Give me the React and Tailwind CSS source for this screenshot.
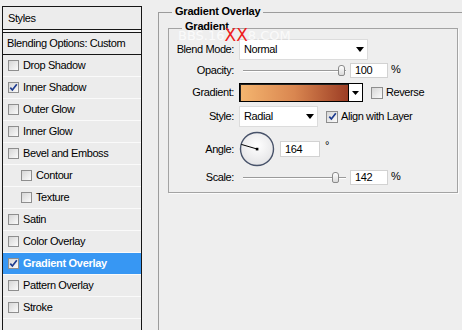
import React from "react";

function Check({ checked, size = 11 }) {
  return (
    <span
      className={`${size === 12 ? "w-[12px] h-[12px]" : "w-[11px] h-[11px]"} shrink-0 border border-[#8e8e8e] bg-linear-to-br from-[#d6d6d6] to-[#fbfbfb] flex items-center justify-center`}
    >
      {checked && (
        <svg width="9" height="9" viewBox="0 0 9 9">
          <path d="M1.3 4.6 L3.4 7 L7.8 1.3" fill="none" stroke="#1d3b8f" strokeWidth="1.7" />
        </svg>
      )}
    </span>
  );
}

function Arrow() {
  return (
    <svg width="8" height="5" viewBox="0 0 8 5" className="shrink-0">
      <path d="M0 0 H8 L4 5 Z" fill="#000" />
    </svg>
  );
}

function Row({ label, checked, sub, active }) {
  return (
    <div
      className={`h-[22px] flex items-center gap-[4px] border-b border-[#fafafa] ${sub ? "pl-[18px]" : "pl-[5px]"} ${active ? "bg-[#3797f3] text-white font-bold tracking-[-0.3px]" : ""}`}
    >
      <Check checked={checked} />
      <span>{label}</span>
    </div>
  );
}

function Slider({ pos }) {
  return (
    <div className="relative w-[107px] h-[15px] shrink-0">
      <div className="absolute left-[4px] right-0 top-[7px] h-[2px] border-t border-[#9a9a9a] border-b border-b-white" />
      <div
        className="absolute top-[2px] w-[7px] h-[11px] rounded-t-[3px] rounded-b-[2px] border border-[#8a8a8a] bg-linear-to-b from-white to-[#dadada]"
        style={{ left: pos }}
      />
    </div>
  );
}

function Field({ value, w = "w-[38px]", h = "h-[15px]" }) {
  return (
    <div className={`${w} ${h} shrink-0 bg-white border border-[#d2d2d2] flex items-center pl-[4px]`}>
      {value}
    </div>
  );
}

function Label({ children }) {
  return <div className="w-[65px] shrink-0 text-right">{children}</div>;
}

export default function App() {
  const rows = [
    { label: "Drop Shadow" },
    { label: "Inner Shadow", checked: true },
    { label: "Outer Glow" },
    { label: "Inner Glow" },
    { label: "Bevel and Emboss" },
    { label: "Contour", sub: true },
    { label: "Texture", sub: true },
    { label: "Satin" },
    { label: "Color Overlay" },
    { label: "Gradient Overlay", checked: true, active: true },
    { label: "Pattern Overlay" },
    { label: "Stroke" },
  ];

  return (
    <div className="relative w-[462px] h-[330px] overflow-hidden bg-[#eeeeee] flex items-start font-['Liberation_Sans',Arial,sans-serif] text-[11px] leading-[13px] tracking-[-0.4px] text-black">
      {/* Left styles list */}
      <div className="ml-[2px] mt-[6px] w-[140px] h-[340px] shrink-0 border border-[#161616] bg-[#ececec]">
        <div className="h-[23px] flex items-center pl-[5px] border-b border-[#161616]">Styles</div>
        <div className="h-[2px] bg-[#f6f6f6]" />
        <div className="h-[23px] flex items-center pl-[4px] border-t border-b border-[#161616]">
          Blending Options: Custom
        </div>
        {rows.map((r, i) => (
          <Row key={i} {...r} />
        ))}
      </div>

      {/* Right: Gradient Overlay group */}
      <div className="relative ml-[16px] mt-[12px] flex-1 h-[340px] border-t border-l border-[#9c9c9c]">
        <span className="absolute left-[13px] top-[-8px] px-[3px] bg-[#eeeeee] font-bold tracking-[-0.2px]">Gradient Overlay</span>

        <div className="relative ml-[9px] mt-[15px] w-[290px] h-[165px] border border-[#a3a3a3] shadow-[1px_1px_0_#fbfbfb]">
          <span className="absolute left-[13px] top-[-9px] px-[3px] bg-[#eeeeee] font-bold tracking-[-0.2px]">Gradient</span>

          <div className="flex flex-col pt-[10px]">
            {/* Blend Mode */}
            <div className="h-[21px] flex items-center gap-[5px]">
              <Label>Blend Mode:</Label>
              <div className="w-[129px] h-[21px] shrink-0 bg-white border border-[#dcdcdc] flex items-center justify-between pl-[4px] pr-[3px]">
                <span>Normal</span>
                <Arrow />
              </div>
            </div>

            {/* Opacity */}
            <div className="mt-[3px] h-[15px] flex items-center gap-[5px]">
              <Label>Opacity:</Label>
              <div className="flex items-center gap-[4px]">
                <Slider pos={99} />
                <Field value="100" />
              </div>
              <span className="-ml-[2px] mb-[3px]">%</span>
            </div>

            {/* Gradient */}
            <div className="mt-[5px] h-[19px] flex items-center gap-[5px]">
              <Label>Gradient:</Label>
              <div className="flex h-[19px] shrink-0 border border-black shadow-[inset_1px_1px_0_#222]">
                <div className="w-[108px] h-full border-t border-l border-[#222] bg-linear-to-r from-[#f4b56f] via-[#d98650] to-[#9c3d25]" />
                <div className="w-[14px] h-full bg-white border-l border-black flex items-center justify-center">
                  <svg width="7" height="4" viewBox="0 0 7 4">
                    <path d="M0 0 H7 L3.5 4 Z" fill="#000" />
                  </svg>
                </div>
              </div>
              <div className="ml-[3px] flex items-center gap-[3px]">
                <Check size={12} />
                <span>Reverse</span>
              </div>
            </div>

            {/* Style */}
            <div className="mt-[4px] h-[21px] flex items-center gap-[5px]">
              <Label>Style:</Label>
              <div className="w-[79px] h-[21px] shrink-0 bg-white border border-[#dcdcdc] flex items-center justify-between pl-[4px] pr-[3px]">
                <span>Radial</span>
                <Arrow />
              </div>
              <div className="ml-[3px] flex items-center gap-[3px]">
                <Check size={12} checked />
                <span>Align with Layer</span>
              </div>
            </div>

            {/* Angle */}
            <div className="mt-[4px] h-[36px] flex items-center gap-[5px]">
              <Label>Angle:</Label>
              <svg width="36" height="36" viewBox="0 0 36 36" className="shrink-0">
                <defs>
                  <radialGradient id="dial" cx="50%" cy="40%" r="60%">
                    <stop offset="0%" stopColor="#ffffff" />
                    <stop offset="100%" stopColor="#e4e4e6" />
                  </radialGradient>
                </defs>
                <circle cx="18" cy="18" r="16.5" fill="url(#dial)" stroke="#48536a" strokeWidth="1.4" />
                <line x1="18" y1="18" x2="2.3" y2="13.4" stroke="#000" strokeWidth="1" />
                <rect x="16.8" y="16.8" width="2.6" height="2.6" fill="#000" />
              </svg>
              <Field value="164" w="w-[40px]" h="h-[16px]" />
              <span className="mb-[8px]">°</span>
            </div>

            {/* Scale */}
            <div className="mt-[3px] h-[15px] flex items-center gap-[5px]">
              <Label>Scale:</Label>
              <div className="flex items-center gap-[4px]">
                <Slider pos={93} />
                <Field value="142" />
              </div>
              <span className="-ml-[2px] mb-[3px]">%</span>
            </div>
          </div>
        </div>
      </div>

      {/* Watermark */}
      <div className="pointer-events-none absolute left-[178px] top-[27px] flex items-end text-[13px] leading-[14px] tracking-[0px] text-white/75 font-['DejaVu_Sans',sans-serif]">
        <span>BBS.16</span>
        <span className="text-[#ee1c1c] text-[17px] leading-[16px]">XX</span>
        <span>8.COM</span>
      </div>
    </div>
  );
}
